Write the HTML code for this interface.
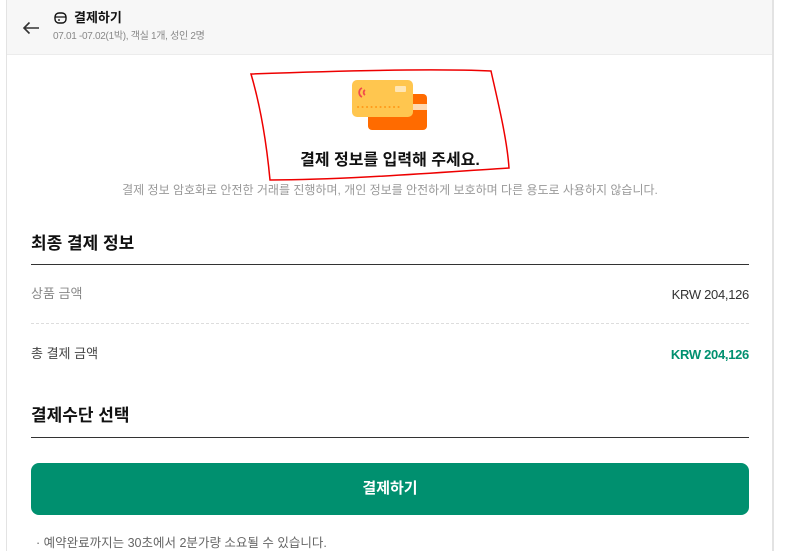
<!DOCTYPE html>
<html><head><meta charset="utf-8"><style>
*{margin:0;padding:0;box-sizing:border-box}
body{width:786px;height:551px;overflow:hidden;background:#fff;font-family:"Liberation Sans","Noto Sans CJK KR",sans-serif;position:relative}
.wrap{position:absolute;left:6px;top:0;width:768px;height:551px;border-left:1px solid #e3e3e3;border-right:2px solid #e3e3e3}
.hdr{position:absolute;left:0;top:0;width:100%;height:55px;background:#f7f7f7;border-bottom:1px solid #ececec}
.abs{position:absolute;white-space:nowrap;line-height:1.2}
</style></head><body>
<div class="wrap">
<div class="hdr">
<svg class="abs" style="left:15px;top:21px" width="18" height="14" viewBox="0 0 18 14"><path d="M17 7H2M7.5 1.5L2 7l5.5 5.5" fill="none" stroke="#333" stroke-width="1.6"/></svg>
<svg class="abs" style="left:47px;top:12px" width="13" height="12" viewBox="0 0 13 12"><rect x="1" y="1" width="11" height="10" rx="4" fill="none" stroke="#111" stroke-width="1.4"/><path d="M1 5h11M4 8h2" stroke="#111" stroke-width="1.2"/></svg>
<div class="abs" style="left:67px;top:10px;font-size:13px;font-weight:bold;color:#111">결제하기</div>
<div class="abs" style="left:46px;top:31px;font-size:10px;color:#888;letter-spacing:-0.3px">07.01 -07.02(1박), 객실 1개, 성인 2명</div>
</div>
</div>
<svg class="abs" style="left:245px;top:68px" width="270" height="115" viewBox="0 0 270 115"><path d="M6 6 C60 4 180 0 246 3 C252 30 262 70 264 100 C200 104 100 112 25 112 C22 80 16 40 6 6 Z" fill="none" stroke="#e00" stroke-width="1.5"/></svg>
<svg class="abs" style="left:352px;top:80px" width="76" height="50" viewBox="0 0 76 50"><rect x="16" y="14" width="59" height="36" rx="4" fill="#ff6b00"/><rect x="58" y="24" width="17" height="6" fill="#ffd9b0"/><rect x="0" y="0" width="61" height="37" rx="5" fill="#ffc64f"/><rect x="43" y="6" width="11" height="6" rx="1" fill="#ffe6b5"/><path d="M10 8a5 5 0 0 0 0 9M13 10a3 3 0 0 0 0 5" fill="none" stroke="#f04c4c" stroke-width="1.8"/><path d="M6 27h44" stroke="#ff9a1a" stroke-width="2" stroke-linecap="round" stroke-dasharray="0.1 4.4"/></svg>
<div class="abs" style="left:0;width:780px;text-align:center;top:151px;font-size:16px;font-weight:bold;color:#111">결제 정보를 입력해 주세요.</div>
<div class="abs" style="left:0;width:780px;text-align:center;top:183px;font-size:12px;color:#999">결제 정보 암호화로 안전한 거래를 진행하며, 개인 정보를 안전하게 보호하며 다른 용도로 사용하지 않습니다.</div>
<div class="abs" style="left:31px;top:234px;font-size:17px;font-weight:bold;color:#111">최종 결제 정보</div>
<div class="abs" style="left:31px;top:264px;width:718px;height:1px;background:#333"></div>
<div class="abs" style="left:31px;top:286px;font-size:13px;color:#888">상품 금액</div>
<div class="abs" style="right:37px;top:287px;font-size:13px;color:#333;letter-spacing:-0.3px">KRW 204,126</div>
<div class="abs" style="left:31px;top:323px;width:718px;border-top:1px dashed #ddd"></div>
<div class="abs" style="left:31px;top:346px;font-size:13px;color:#444">총 결제 금액</div>
<div class="abs" style="right:37px;top:347px;font-size:13px;font-weight:bold;color:#00906f;letter-spacing:-0.3px">KRW 204,126</div>
<div class="abs" style="left:31px;top:406px;font-size:17px;font-weight:bold;color:#111">결제수단 선택</div>
<div class="abs" style="left:31px;top:437px;width:718px;height:1px;background:#333"></div>
<div class="abs" style="left:31px;top:463px;width:718px;height:52px;border-radius:8px;background:#00906f;color:#fff;font-size:15px;font-weight:bold;text-align:center;line-height:52px">결제하기</div>
<div class="abs" style="left:36px;top:536px;font-size:12.5px;color:#666">· 예약완료까지는 30초에서 2분가량 소요될 수 있습니다.</div>
</body></html>
